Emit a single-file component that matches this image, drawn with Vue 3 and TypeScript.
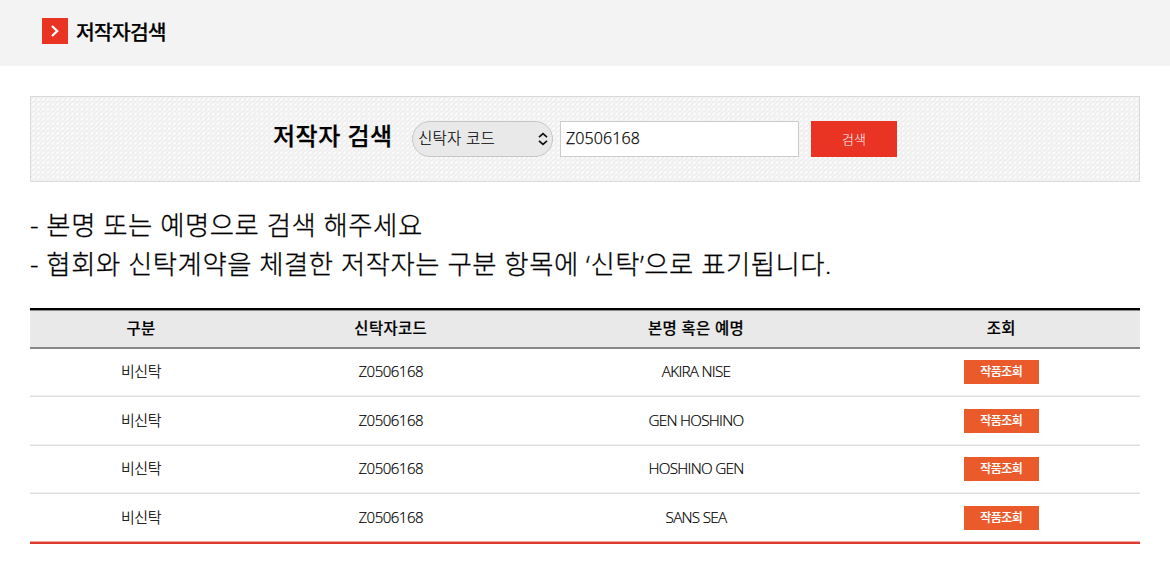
<script setup lang="ts">
import { ref } from 'vue'

interface Author {
  kind: string
  code: string
  name: string
}

const keyword = ref('Z0506168')
const searchType = ref('code')

const notes: string[] = [
  '- 본명 또는 예명으로 검색 해주세요',
  '- 협회와 신탁계약을 체결한 저작자는 구분 항목에 ‘신탁’으로 표기됩니다.',
]

const authors: Author[] = ['AKIRA NISE', 'GEN HOSHINO', 'HOSHINO GEN', 'SANS SEA'].map((name) => ({
  kind: '비신탁',
  code: 'Z0506168',
  name,
}))
</script>

<template>
  <div class="page">
    <header class="head">
      <svg class="mark" width="26" height="26" viewBox="0 0 26 26">
        <rect width="26" height="26" fill="#e93323" />
        <path d="M10 8 L15.2 13 L10 18" fill="none" stroke="#fff" stroke-width="2.3" />
      </svg>
      <h1>저작자검색</h1>
    </header>

    <main>
      <form class="search" @submit.prevent>
        <svg class="pattern" width="100%" height="100%">
          <defs>
            <pattern id="weave" width="4.86" height="4.86" patternUnits="userSpaceOnUse">
              <rect width="4.86" height="4.86" fill="#ededed" />
              <path d="M-1.2 1.2 L1.2 -1.2 M0 4.86 L4.86 0 M3.66 6.06 L6.06 3.66" stroke="#f6f6f6" stroke-width="1.7" />
              <circle cx="2.43" cy="2.43" r="1.15" fill="#fff" />
            </pattern>
          </defs>
          <rect width="100%" height="100%" fill="url(#weave)" />
        </svg>
        <label class="title">저작자 검색</label>
        <div class="select">
          <select v-model="searchType">
            <option value="code">신탁자 코드</option>
          </select>
          <svg class="arrows" width="12" height="14" viewBox="0 0 12 14">
            <path d="M2 5.2 L6 1.6 L10 5.2 M2 8.8 L6 12.4 L10 8.8" fill="none" stroke="#111" stroke-width="1.7" />
          </svg>
        </div>
        <input v-model="keyword" type="text" />
        <button class="submit" type="submit">검색</button>
      </form>

      <div class="notes">
        <p v-for="note in notes" :key="note">{{ note }}</p>
      </div>

      <table>
        <colgroup>
          <col class="c20" />
          <col class="c25" />
          <col class="c30" />
          <col class="c25" />
        </colgroup>
        <thead>
          <tr>
            <th>구분</th>
            <th>신탁자코드</th>
            <th>본명 혹은 예명</th>
            <th>조회</th>
          </tr>
        </thead>
        <tbody>
          <tr v-for="author in authors" :key="author.name">
            <td class="kind">{{ author.kind }}</td>
            <td class="code">{{ author.code }}</td>
            <td class="name">{{ author.name }}</td>
            <td class="action"><button class="works" type="button">작품조회</button></td>
          </tr>
        </tbody>
      </table>
    </main>
  </div>
</template>

<style>
html,
body {
  background: #fff;
  overflow: hidden;
}
</style>

<style scoped>
.page,
select,
input,
button {
  font-family: "Open Sans", "Noto Sans CJK KR", sans-serif;
  color: #000;
}
.page {
  height: 586px;
  box-sizing: border-box;
}
.head {
  display: flex;
  align-items: center;
  height: 66px;
  padding: 0 42px 4px;
  box-sizing: border-box;
  background: #f3f3f3;
}
h1 {
  margin: 1px 0 0 8px;
  font-size: 20.4px;
  line-height: 30px;
  font-weight: 500;
  letter-spacing: -0.8px;
  -webkit-text-stroke: 0.2px #000;
}
main {
  padding: 29.5px 30px 0;
}
.search {
  position: relative;
  display: flex;
  align-items: center;
  height: 86px;
  padding-left: 242px;
  box-sizing: border-box;
  border: 1px solid #dadada;
}
.pattern {
  position: absolute;
  inset: 0;
}
.title,
.select,
.search input,
.submit {
  position: relative;
}
.title {
  width: 139px;
  margin-bottom: 5px;
  font-size: 24px;
  line-height: 36px;
  font-weight: 500;
  letter-spacing: 0.5px;
  white-space: nowrap;
  -webkit-text-stroke: 0.25px #000;
}
.select {
  width: 141px;
  height: 36px;
}
select {
  appearance: none;
  width: 100%;
  height: 100%;
  padding: 0 5px 2px;
  border: 1px solid #c6c6c6;
  border-radius: 18px;
  background: #e9e9e9;
  font-size: 15.6px;
  font-weight: 300;
  letter-spacing: 0.2px;
  -webkit-text-stroke: 0.15px #000;
}
.arrows {
  position: absolute;
  right: 4px;
  top: 11px;
}
input {
  width: 239px;
  height: 36px;
  margin-left: 7px;
  padding: 0 5px 2px;
  box-sizing: border-box;
  border: 1px solid #ccc;
  background: #fff;
  font-size: 16px;
  font-weight: 300;
  letter-spacing: 0.1px;
  -webkit-text-stroke: 0.25px #000;
}
button {
  border: 0;
  border-radius: 0;
  padding: 0;
}
.submit {
  width: 86px;
  height: 36px;
  margin-left: 12px;
  padding-bottom: 1px;
  background: #e93323;
  color: #fff;
  font-size: 13px;
  font-weight: 300;
}
.notes {
  padding-top: 24px;
}
.notes p {
  margin: 0;
  font-size: 26.4px;
  line-height: 39px;
  font-weight: 300;
  letter-spacing: 0.5px;
  white-space: nowrap;
  -webkit-text-stroke: 0.3px #000;
}
table {
  width: 1110px;
  margin-top: 24px;
  table-layout: fixed;
  border-collapse: separate;
  border-spacing: 0;
  text-align: center;
}
.c20 {
  width: 20%;
}
.c25 {
  width: 25%;
}
.c30 {
  width: 30%;
}
th {
  height: 41px;
  padding: 1px 0 0;
  box-sizing: border-box;
  border-top: 2px solid #000;
  border-bottom: 2px solid #888;
  background: #e9e9e9;
  box-shadow: inset 0 1px #8b8b8b;
  font-size: 15.4px;
  line-height: 22px;
  font-weight: 500;
  letter-spacing: 0.4px;
  -webkit-text-stroke: 0.2px #000;
}
td {
  height: 48.6px;
  padding: 0 0 2px;
  box-sizing: border-box;
  border-bottom: 1px solid #dedede;
  box-shadow: inset 0 -1px #f1f1f1;
  font-size: 15px;
  line-height: 22px;
  font-weight: 300;
  letter-spacing: -0.5px;
  -webkit-text-stroke: 0.2px #000;
}
td.name {
  font-size: 15.3px;
  letter-spacing: -0.75px;
}
td.action {
  padding-bottom: 0;
}
tbody tr:last-child td {
  height: 49.6px;
  border-bottom: 2px solid #e03a30;
  box-shadow: inset 0 -1px #f2a7a2;
}
.works {
  display: block;
  width: 75px;
  height: 24px;
  margin: 0 auto;
  background: #ea5a2a;
  color: #fff;
  font-size: 12px;
  line-height: 22px;
  font-weight: 500;
  letter-spacing: -0.6px;
  -webkit-text-stroke: 0.2px #fff;
}
</style>
